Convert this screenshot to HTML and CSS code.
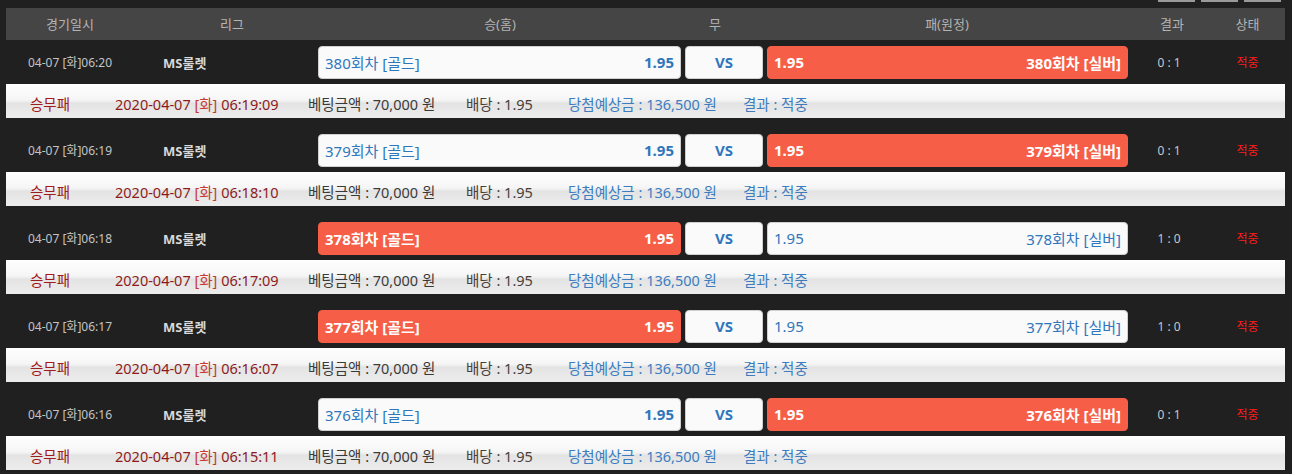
FILE: index.html
```html
<!DOCTYPE html>
<html lang="ko">
<head>
<meta charset="utf-8">
<link rel="stylesheet" href="styles.css">
</head>
<body>
<div class="page">
  <div class="topbar">
    <span class="tbtn"></span><span class="tbtn"></span><span class="tbtn"></span>
  </div>
  <div class="wrap">
    <div class="thead">
      <div class="h c-date">경기일시</div>
      <div class="h c-league">리그</div>
      <div class="h c-home">승(홈)</div>
      <div class="h c-draw">무</div>
      <div class="h c-away">패(원정)</div>
      <div class="h c-res">결과</div>
      <div class="h c-stat">상태</div>
    </div>

    <div class="block">
      <div class="match">
        <div class="m-date">04-07 [화]06:20</div>
        <div class="m-league">MS룰렛</div>
        <div class="box home"><span>380회차 [골드]</span><b>1.95</b></div>
        <div class="box vs">VS</div>
        <div class="box away pick"><b>1.95</b><b>380회차 [실버]</b></div>
        <div class="m-res">0 : 1</div>
        <div class="m-stat">적중</div>
      </div>
      <div class="detail">
        <span class="d1">승무패</span>
        <span class="d2">2020-04-07 <em>[화]</em> 06:19:09</span>
        <span class="d3">베팅금액 : 70,000 원</span>
        <span class="d4">배당 : 1.95</span>
        <span class="d5">당첨예상금 : 136,500 원</span>
        <span class="d6">결과 : 적중</span>
      </div>
    </div>

    <div class="block">
      <div class="match">
        <div class="m-date">04-07 [화]06:19</div>
        <div class="m-league">MS룰렛</div>
        <div class="box home"><span>379회차 [골드]</span><b>1.95</b></div>
        <div class="box vs">VS</div>
        <div class="box away pick"><b>1.95</b><b>379회차 [실버]</b></div>
        <div class="m-res">0 : 1</div>
        <div class="m-stat">적중</div>
      </div>
      <div class="detail">
        <span class="d1">승무패</span>
        <span class="d2">2020-04-07 <em>[화]</em> 06:18:10</span>
        <span class="d3">베팅금액 : 70,000 원</span>
        <span class="d4">배당 : 1.95</span>
        <span class="d5">당첨예상금 : 136,500 원</span>
        <span class="d6">결과 : 적중</span>
      </div>
    </div>

    <div class="block">
      <div class="match">
        <div class="m-date">04-07 [화]06:18</div>
        <div class="m-league">MS룰렛</div>
        <div class="box home pick"><b>378회차 [골드]</b><b>1.95</b></div>
        <div class="box vs">VS</div>
        <div class="box away"><span>1.95</span><span>378회차 [실버]</span></div>
        <div class="m-res">1 : 0</div>
        <div class="m-stat">적중</div>
      </div>
      <div class="detail">
        <span class="d1">승무패</span>
        <span class="d2">2020-04-07 <em>[화]</em> 06:17:09</span>
        <span class="d3">베팅금액 : 70,000 원</span>
        <span class="d4">배당 : 1.95</span>
        <span class="d5">당첨예상금 : 136,500 원</span>
        <span class="d6">결과 : 적중</span>
      </div>
    </div>

    <div class="block">
      <div class="match">
        <div class="m-date">04-07 [화]06:17</div>
        <div class="m-league">MS룰렛</div>
        <div class="box home pick"><b>377회차 [골드]</b><b>1.95</b></div>
        <div class="box vs">VS</div>
        <div class="box away"><span>1.95</span><span>377회차 [실버]</span></div>
        <div class="m-res">1 : 0</div>
        <div class="m-stat">적중</div>
      </div>
      <div class="detail">
        <span class="d1">승무패</span>
        <span class="d2">2020-04-07 <em>[화]</em> 06:16:07</span>
        <span class="d3">베팅금액 : 70,000 원</span>
        <span class="d4">배당 : 1.95</span>
        <span class="d5">당첨예상금 : 136,500 원</span>
        <span class="d6">결과 : 적중</span>
      </div>
    </div>

    <div class="block">
      <div class="match">
        <div class="m-date">04-07 [화]06:16</div>
        <div class="m-league">MS룰렛</div>
        <div class="box home"><span>376회차 [골드]</span><b>1.95</b></div>
        <div class="box vs">VS</div>
        <div class="box away pick"><b>1.95</b><b>376회차 [실버]</b></div>
        <div class="m-res">0 : 1</div>
        <div class="m-stat">적중</div>
      </div>
      <div class="detail">
        <span class="d1">승무패</span>
        <span class="d2">2020-04-07 <em>[화]</em> 06:15:11</span>
        <span class="d3">베팅금액 : 70,000 원</span>
        <span class="d4">배당 : 1.95</span>
        <span class="d5">당첨예상금 : 136,500 원</span>
        <span class="d6">결과 : 적중</span>
      </div>
    </div>
  </div>
</div>
</body>
</html>
```

FILE: styles.css
```css
html, body {
  margin: 0;
  padding: 0;
  background: #202020;
  font-family: "Noto Sans", "Noto Sans CJK KR", sans-serif;
  overflow: hidden;
}

.page {
  width: 1292px;
  height: 474px;
  overflow: hidden;
}

.topbar {
  height: 8px;
  display: flex;
  justify-content: flex-end;
  gap: 6px;
  padding-right: 11px;
}

.tbtn {
  width: 37px;
  height: 2px;
  background: #9a9a9a;
}

.wrap {
  margin-left: 6px;
  width: 1279px;
}

.thead {
  display: flex;
  height: 32px;
  background: #454545;
}

.h {
  text-align: center;
  line-height: 32px;
  font-size: 13px;
  color: #b4b4b4;
}

.c-date { width: 128px; }
.c-league { width: 196px; }
.c-home { width: 340px; }
.c-draw { width: 90px; }
.c-away { width: 374px; }
.c-res { width: 76px; }
.c-stat { flex: 1; }

.block + .block {
  margin-top: 10px;
}

.match {
  display: flex;
  align-items: center;
  height: 44px;
  background: #202020;
}

.m-date {
  width: 128px;
  text-align: center;
  font-size: 12px;
  color: #c4c4c4;
}

.m-league {
  width: 155px;
  padding-left: 29px;
  font-size: 13px;
  font-weight: bold;
  color: #d8d8d8;
}

.box {
  height: 33px;
  box-sizing: border-box;
  border: 1px solid #cfcfcf;
  border-radius: 4px;
  background: #fafafa;
  display: flex;
  align-items: center;
  justify-content: space-between;
  padding: 0 6px;
  font-size: 15px;
  color: #2f76bd;
}

.box b {
  font-weight: bold;
}

.home {
  width: 363px;
}

.vs {
  width: 78px;
  margin-left: 4px;
  justify-content: center;
  font-weight: bold;
}

.away {
  width: 361px;
  margin-left: 4px;
}

.box.pick {
  background: #f65e47;
  border-color: #f65e47;
  color: #ffffff;
}

.m-res {
  width: 82px;
  text-align: center;
  font-size: 12px;
  color: #c8c8c8;
}

.m-stat {
  flex: 1;
  text-align: center;
  font-size: 12px;
  color: #ff1a1a;
}

.detail {
  display: flex;
  align-items: center;
  height: 34px;
  box-sizing: border-box;
  padding-top: 3px;
  padding-left: 24px;
  border-top: 1px solid #ffffff;
  background: linear-gradient(#fdfdfd 0%, #f6f6f6 45%, #e4e4e4 55%, #ececec 100%);
  font-size: 14.5px;
  white-space: nowrap;
}

.detail span {
  display: block;
}

.d1 { width: 85px; color: #a11a1a; }
.d2 { width: 193px; color: #8e1b1b; }
.d2 em { font-style: normal; color: #c83a2e; }
.d3 { width: 158px; color: #3a3a3a; }
.d4 { width: 102px; color: #4a4038; }
.d5 { width: 175px; color: #3b7dc0; }
.d6 { color: #3b7dc0; }
```
